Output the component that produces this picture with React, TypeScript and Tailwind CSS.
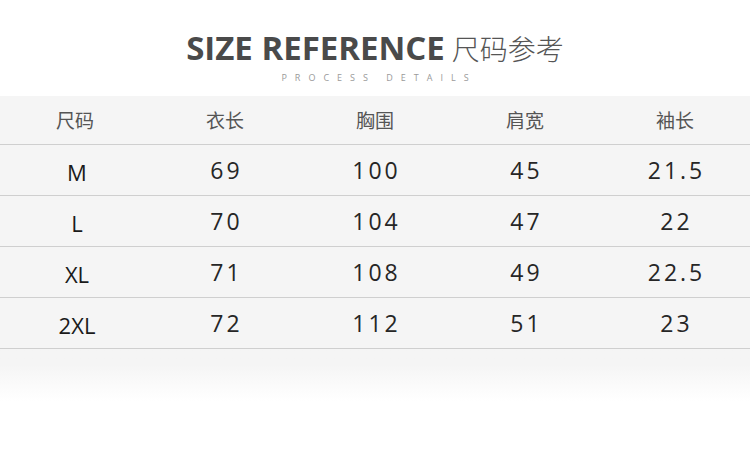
const headers = ["尺码", "衣长", "胸围", "肩宽", "袖长"];

const rows = [
  ["M", "69", "100", "45", "21.5"],
  ["L", "70", "104", "47", "22"],
  ["XL", "71", "108", "49", "22.5"],
  ["2XL", "72", "112", "51", "23"],
];

export default function App() {
  return (
    <div
      className="w-[750px] h-[450px] bg-white flex flex-col overflow-hidden"
      style={{ fontFamily: '"Open Sans", "Noto Sans CJK SC", sans-serif' }}
    >
      <header className="flex flex-col items-center pt-[31px] h-[96px]">
        <div className="flex items-baseline gap-[7px] leading-none">
          <span className="text-[33px] font-bold text-[#4a4a4a]">
            SIZE REFERENCE
          </span>
          <span
            className="text-[28px] font-light text-[#555]"
            style={{ fontFamily: '"Noto Sans CJK SC", sans-serif' }}
          >
            尺码参考
          </span>
        </div>
        <p className="mt-[9px] text-[9px] tracking-[8px] text-[#9a9a9a] leading-none pl-[8px]">
          PROCESS DETAILS
        </p>
      </header>

      <main className="bg-[#f5f5f5]">
        <div className="grid grid-cols-5 h-[49px] items-center border-b border-[#cfcfcf]">
          {headers.map((h) => (
            <div
              key={h}
              className="text-center text-[19px] text-[#555]"
              style={{ fontFamily: '"Noto Sans CJK SC", sans-serif' }}
            >
              {h}
            </div>
          ))}
        </div>
        {rows.map((r) => (
          <div
            key={r[0]}
            className="grid grid-cols-5 h-[51px] items-center border-b border-[#cfcfcf]"
          >
            {r.map((v, i) => (
              <div
                key={i}
                className={
                  i === 0
                    ? "text-center text-[22px] text-[#1a1a1a] pt-[4px] pl-[4px]"
                    : "text-center text-[23px] text-[#262626] tracking-[3px] pl-[3px]"
                }
              >
                {v}
              </div>
            ))}
          </div>
        ))}
      </main>
      <div className="h-[52px] bg-gradient-to-b from-[#f5f5f5] from-30% to-white" />
    </div>
  );
}
